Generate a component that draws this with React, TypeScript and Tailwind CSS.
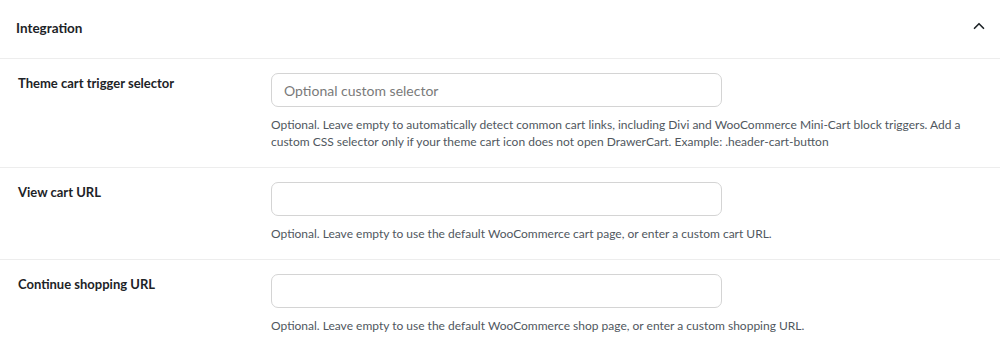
import { ChevronUp } from "lucide-react";

type Field = {
  label: string;
  placeholder?: string;
  help: string;
};

const fields: Field[] = [
  {
    label: "Theme cart trigger selector",
    placeholder: "Optional custom selector",
    help: "Optional. Leave empty to automatically detect common cart links, including Divi and WooCommerce Mini-Cart block triggers. Add a custom CSS selector only if your theme cart icon does not open DrawerCart. Example: .header-cart-button",
  },
  {
    label: "View cart URL",
    help: "Optional. Leave empty to use the default WooCommerce cart page, or enter a custom cart URL.",
  },
  {
    label: "Continue shopping URL",
    help: "Optional. Leave empty to use the default WooCommerce shop page, or enter a custom shopping URL.",
  },
];

function FieldRow({ field }: { field: Field }) {
  return (
    <div className="flex border-t border-[#ededed] pt-[14px] pb-[17px]">
      <div className="w-[271px] shrink-0 pl-[18px] pt-[1px] text-[13px] font-bold text-[#1d2327]">
        {field.label}
      </div>
      <div className="w-[720px]">
        <input
          type="text"
          placeholder={field.placeholder}
          className="block h-[34px] w-[451px] rounded-[7px] border border-[#d4d4d4] bg-white px-[12px] text-[14px] text-[#1d2327] placeholder:text-[#7a7a7a] outline-none"
        />
        <p className="mt-[9px] text-[12px] leading-[17px] text-[#50575e]">{field.help}</p>
      </div>
    </div>
  );
}

export default function App() {
  return (
    <div className="h-[349px] w-[1000px] overflow-hidden bg-white font-['Lato',sans-serif]">
      <div className="flex h-[58px] items-center justify-between pl-[16px] pr-[12px]">
        <h2 className="mt-[-2px] text-[13.5px] font-bold text-[#1d2327]">Integration</h2>
        <ChevronUp className="mt-[-6px] h-[18px] w-[18px] text-[#1d2327]" strokeWidth={2.2} />
      </div>
      {fields.map((f) => (
        <FieldRow key={f.label} field={f} />
      ))}
    </div>
  );
}
